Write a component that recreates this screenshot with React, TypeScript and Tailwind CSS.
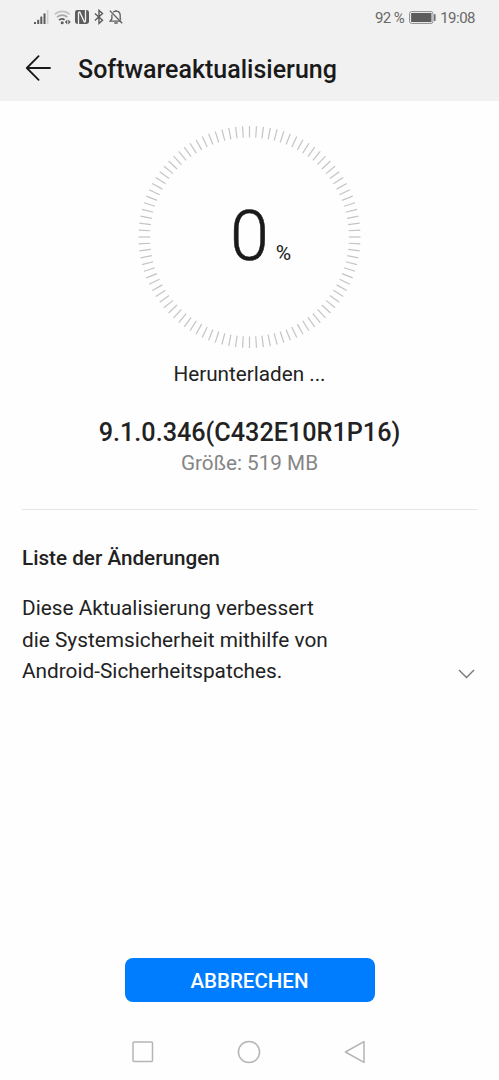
const TICK_COUNT = 100;

function SignalIcon() {
  return (
    <svg width="16" height="16" viewBox="0 0 16 16" className="shrink-0">
      <g fill="#5c5c5c">
        <rect x="1" y="13" width="2" height="2" />
        <rect x="4.2" y="10.8" width="2" height="4.2" />
        <rect x="7.3" y="7.6" width="2" height="7.4" />
        <rect x="10.5" y="4.4" width="2" height="10.6" />
      </g>
      <rect x="13.8" y="1" width="1.6" height="14" fill="#d0d0d0" />
    </svg>
  );
}

function WifiIcon() {
  return (
    <svg width="18" height="16" viewBox="0 0 18 16" fill="none" className="shrink-0">
      <path d="M.8 5.4a10.6 10.6 0 0 1 14.8 0" stroke="#c4c4c4" strokeWidth="1.7" />
      <path d="M3 8.2a7.6 7.6 0 0 1 10.4 0" stroke="#a8a8a8" strokeWidth="1.6" />
      <path d="M5 11.2a4.6 4.6 0 0 1 5.6-.4" stroke="#5c5c5c" strokeWidth="1.8" />
      <circle cx="8.2" cy="13.8" r="1.5" fill="#5c5c5c" />
      <path d="M13.3 10.6v4.8L10.9 13zM14.3 10.6v4.8l2.4-2.4z" fill="#5c5c5c" />
    </svg>
  );
}

function NfcIcon() {
  return (
    <svg width="14" height="16" viewBox="0 0 14 16" fill="none" className="shrink-0">
      <rect x="0" y="1" width="14" height="14" rx="2.4" fill="#5c5c5c" />
      <path d="M3.5 15V4.2q0-1.2 1.2-1.2L9.4 13q1.1 0 1.1-1.2V1" stroke="#f1f1f1" strokeWidth="1.3" />
    </svg>
  );
}

function BluetoothIcon() {
  return (
    <svg width="10" height="16" viewBox="0 0 10 16" fill="none" stroke="#5c5c5c" strokeWidth="1.4" className="shrink-0">
      <path d="M.9 4.4l7.6 6.9L5 14.4V1.4l3.5 3.1L.9 11.5" />
    </svg>
  );
}

function BellOffIcon() {
  return (
    <svg width="14" height="16" viewBox="0 0 14 16" fill="none" stroke="#5c5c5c" strokeWidth="1.3" className="shrink-0">
      <path d="M2.9 5.4v4.3L1 12.2h11M4.2 3.2Q5.4 2.2 7 2.2q4.2 0 4.2 4.4v3.1l.7.9M7 2.2V1M5.3 14h3.4" />
      <path d="M.8 1.6l12.4 12.6" />
    </svg>
  );
}

function BatteryIcon() {
  return (
    <svg width="27" height="13" viewBox="0 0 27 13" className="shrink-0">
      <rect x="0.6" y="0.6" width="23.4" height="11.8" rx="2" fill="none" stroke="#8a8a8a" />
      <rect x="2.1" y="2" width="20.4" height="9" rx="0.6" fill="#5c5c5c" />
      <rect x="25.1" y="3.3" width="1.4" height="6.6" fill="#5c5c5c" />
    </svg>
  );
}

function StatusBar() {
  return (
    <div className="flex h-[34px] items-center pr-[24px] pl-[33px] text-[#696969]">
      <SignalIcon />
      <div className="ml-[5px] flex items-center">
        <WifiIcon />
      </div>
      <div className="ml-[3px] flex items-center">
        <NfcIcon />
      </div>
      <div className="ml-[5px] flex items-center">
        <BluetoothIcon />
      </div>
      <div className="ml-[5px] flex items-center">
        <BellOffIcon />
      </div>
      <span className="ml-auto pt-[2px] text-[15px] leading-none tracking-[-0.6px]">92 %</span>
      <div className="mr-[4px] ml-[5px]">
        <BatteryIcon />
      </div>
      <span className="pt-[2px] text-[15px] leading-none tracking-[-0.5px]">19:08</span>
    </div>
  );
}

function ProgressDial({ percent }: { percent: number }) {
  const ticks = Array.from({ length: TICK_COUNT }, (_, i) => i);

  return (
    <div className="relative mt-[24px] ml-[137px] h-[225px] w-[225px]">
      <svg width="225" height="225" viewBox="0 0 225 225">
        {ticks.map((i) => (
          <line
            key={i}
            x1="112.5"
            y1="1"
            x2="112.5"
            y2="12.6"
            stroke={i < percent ? "#007dff" : "#c4c4c4"}
            strokeWidth="1.2"
            transform={`rotate(${i * (360 / TICK_COUNT)} 112.5 112)`}
          />
        ))}
      </svg>
      <div className="absolute inset-0 flex items-baseline pt-[70px] pl-[93px] text-[#1a1a1a]">
        <span className="text-[70px] leading-[83px] font-light [-webkit-text-stroke:0.5px_#1a1a1a]">{percent}</span>
        <span className="ml-[7px] text-[21px]">%</span>
      </div>
    </div>
  );
}

export default function App() {
  return (
    <div className="flex h-[1080px] w-[499px] flex-col bg-[#fefefe] font-['Roboto',sans-serif] text-[#222222]">
      <header className="h-[101px] bg-[#f1f1f1]">
        <StatusBar />
        <div className="flex h-[68px] items-center pl-[25px]">
          <svg width="27" height="28" viewBox="0 0 27 28" fill="none" stroke="#1a1a1a" strokeWidth="1.8" strokeLinecap="round" strokeLinejoin="round">
            <path d="M25 14H1.8M13.6 2.2L1.8 14l11.8 11.8" />
          </svg>
          <h1 className="ml-[26px] pt-[3px] text-[25px] font-medium text-[#1a1a1a]">Softwareaktualisierung</h1>
        </div>
      </header>

      <main className="flex flex-1 flex-col">
        <ProgressDial percent={0} />

        <div className="flex flex-col items-center">
          <p className="mt-[9px] text-[20.7px] leading-[31px]">Herunterladen ...</p>
          <p className="mt-[25px] text-[25.2px] leading-[36px] font-medium">9.1.0.346(C432E10R1P16)</p>
          <p className="text-[20.7px] leading-[25px] text-[#858585]">Größe: 519 MB</p>
        </div>

        <hr className="mx-[22px] mt-[33px] border-[#e5e5e5]" />

        <section className="px-[22px]">
          <h2 className="mt-[32px] text-[20.7px] leading-[32px] font-medium">Liste der Änderungen</h2>
          <div className="mt-[19px] flex items-end justify-between">
            <p className="text-[20.8px] leading-[31.5px]">
              Diese Aktualisierung verbessert
              <br />
              die Systemsicherheit mithilfe von
              <br />
              Android-Sicherheitspatches.
            </p>
            <svg width="20" height="12" viewBox="0 0 20 12" fill="none" stroke="#777777" strokeWidth="1.4" className="mb-[8px]">
              <path d="M2 2l7.5 7.5L17 2" />
            </svg>
          </div>
        </section>

        <button className="mx-auto mt-auto mb-[23px] h-[44px] w-[250px] rounded-[8px] bg-[#007dff] pt-[2px] text-[20.5px] font-medium text-white">
          ABBRECHEN
        </button>
      </main>

      <nav className="flex h-[55px] items-center justify-between pr-[132px] pb-[2px] pl-[131px]">
        <svg width="24" height="24" viewBox="0 0 24 24" fill="none" stroke="#b5b5b5" strokeWidth="1.5">
          <rect x="2" y="2" width="19.5" height="19.5" rx="1" />
        </svg>
        <svg width="24" height="24" viewBox="0 0 24 24" fill="none" stroke="#b5b5b5" strokeWidth="1.5">
          <circle cx="12" cy="12" r="10.6" />
        </svg>
        <svg width="24" height="24" viewBox="0 0 24 24" fill="none" stroke="#b5b5b5" strokeWidth="1.5" strokeLinejoin="round">
          <path d="M21 1.6v20.8L2.4 12z" />
        </svg>
      </nav>
    </div>
  );
}
